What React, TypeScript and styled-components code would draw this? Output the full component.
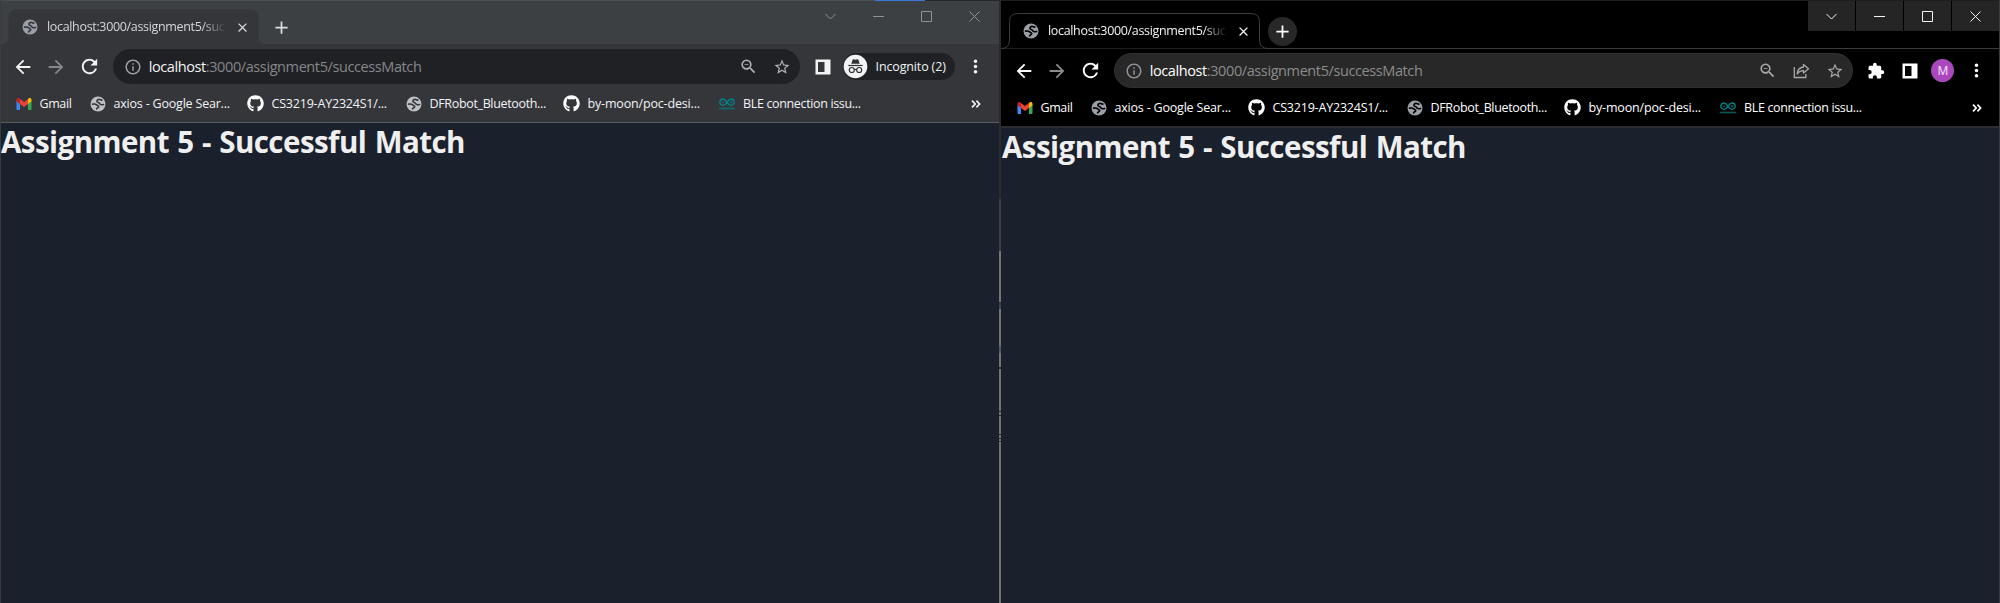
import React from 'react';
import styled, { createGlobalStyle, ThemeProvider } from 'styled-components';
import {
  MdAdd,
  MdArrowBack,
  MdArrowForward,
  MdClose,
  MdExtension,
  MdInfoOutline,
  MdMoreVert,
  MdRefresh,
  MdStarBorder,
  MdZoomOut,
} from 'react-icons/md';
import { FaGithub } from 'react-icons/fa';

const incognito = {
  strip: '#3c4043',
  stripHeight: '44px',
  topLine: '#4b4e50',
  toolbar: '#35363a',
  tabStroke: 'none',
  stripLine: '#35363a',
  field: '#202124',
  fieldLine: '#202124',
  text: '#f1f3f4',
  tabText: '#d4d6d9',
  dim: '#85878a',
  globe: '#bdc1c6',
  tabGlobe: '#9aa0a6',
  fieldIcon: '#b0b2b5',
  info: '#9aa0a6',
  controls: '#8f9193',
  controlBg: 'transparent',
  plusBg: 'transparent',
  plus: '#dadce0',
  pageLine: '#595b5f',
  pageLineHeight: '1px',
};

const regular: typeof incognito = {
  strip: '#000',
  stripHeight: '48px',
  topLine: '#1d1d1d',
  toolbar: '#000',
  tabStroke: '#3c3c3c',
  stripLine: '#3c3c3c',
  field: '#282828',
  fieldLine: '#303030',
  text: '#ffffff',
  tabText: '#f4f4f4',
  dim: '#8b8b8b',
  globe: '#9aa0a6',
  tabGlobe: '#9aa0a6',
  fieldIcon: '#a8a8a8',
  info: '#8e9196',
  controls: '#f2f2f2',
  controlBg: '#252525',
  plusBg: '#282828',
  plus: '#ffffff',
  pageLine: '#2c2e34',
  pageLineHeight: '2px',
};

declare module 'styled-components' {
  export interface DefaultTheme {
    [key: string]: string;
  }
}

const GlobalStyle = createGlobalStyle`
  * { box-sizing: border-box; }
  body { margin: 0; background: #1a202c; overflow: hidden; }
  svg { display: block; flex: none; }
`;

const Desktop = styled.div`
  display: flex;
  width: 2000px;
  height: 603px;
  font-family: 'Open Sans', 'Noto Sans', sans-serif;
`;

const Window = styled.section<{ $edge: 'left' | 'right' }>`
  position: relative;
  display: flex;
  flex-direction: column;
  width: 999px;
  background: #1a202c;

  &::after {
    content: '';
    position: absolute;
    top: 0;
    bottom: 0;
    ${(p) => p.$edge}: 0;
    width: 1px;
    background: #3b3c3f;
  }
`;

const TopEdge = styled.div`
  display: flex;
  height: 1px;
  flex: none;
  background: ${(p) => p.theme.topLine};
`;

const TopEdgePart = styled.span<{ $width: number; $color: string }>`
  width: ${(p) => p.$width}px;
  background: ${(p) => p.$color};
`;

const TabStrip = styled.div`
  display: flex;
  align-items: flex-end;
  flex: none;
  height: ${(p) => p.theme.stripHeight};
  padding-right: 1px;
  background: ${(p) => p.theme.strip};
  box-shadow: inset 0 -1px 0 ${(p) => p.theme.stripLine};
`;

const Tab = styled.div`
  position: relative;
  display: flex;
  align-items: center;
  width: 267px;
  height: 36px;
  padding-left: 22px;
`;

const TabOutline = styled.svg`
  position: absolute;
  inset: 0;
  fill: ${(p) => p.theme.toolbar};
  stroke: ${(p) => p.theme.tabStroke};
`;

const TabIcon = styled.span`
  position: relative;
  color: ${(p) => p.theme.tabGlobe};
`;

const TabTitle = styled.span`
  position: relative;
  width: 184px;
  margin-left: 9px;
  white-space: nowrap;
  font-size: 12.5px;
  line-height: 20px;
  letter-spacing: -0.33px;
  color: ${(p) => p.theme.tabText};
  mask-image: linear-gradient(to right, #000 155px, transparent 179px);
`;

const TabClose = styled.span`
  position: relative;
  margin-left: 4px;
  color: ${(p) => p.theme.tabText};
`;

const NewTab = styled.span`
  display: flex;
  align-items: center;
  justify-content: center;
  width: 29px;
  height: 29px;
  margin-bottom: 3px;
  border-radius: 50%;
  color: ${(p) => p.theme.plus};
  background: ${(p) => p.theme.plusBg};
`;

const WindowControls = styled.div`
  display: flex;
  align-self: flex-start;
  gap: 1px;
  margin-left: auto;
`;

const WindowControl = styled.span`
  display: flex;
  align-items: center;
  justify-content: center;
  width: 47px;
  height: 30px;
  background: ${(p) => p.theme.controlBg};
  color: ${(p) => p.theme.controls};
`;

const Toolbar = styled.div`
  display: flex;
  align-items: center;
  flex: none;
  height: 43px;
  padding: 0 7px 0 6px;
  background: ${(p) => p.theme.toolbar};
  color: ${(p) => p.theme.text};
`;

const ToolButton = styled.span<{ $muted?: boolean }>`
  display: flex;
  align-items: center;
  justify-content: center;
  flex: none;
  width: 33.4px;
  height: 33px;
  ${(p) => p.$muted && `color: ${p.theme.dim};`}
`;

const AddressBar = styled.div`
  display: flex;
  align-items: center;
  flex: 1;
  height: 35px;
  margin: 0 6px 0 7px;
  padding: 0 1px 0 9.5px;
  border-radius: 18px;
  background: ${(p) => p.theme.field};
  border: 1px solid ${(p) => p.theme.fieldLine};
  color: ${(p) => p.theme.fieldIcon};
`;

const InfoIcon = styled.span`
  color: ${(p) => p.theme.info};
`;

const Url = styled.span`
  flex: 1;
  margin-left: 7px;
  padding-top: 1px;
  font-size: 14.5px;
  line-height: 20px;
  letter-spacing: -0.4px;
  white-space: nowrap;
  color: ${(p) => p.theme.dim};
`;

const UrlHost = styled.span`
  color: ${(p) => p.theme.text};
`;

const ProfilePill = styled.div`
  display: flex;
  align-items: center;
  width: 112px;
  height: 27px;
  margin: 0 4px 0 3px;
  border-radius: 14px;
  background: #202124;
  font-size: 12.5px;
  letter-spacing: -0.15px;
  white-space: nowrap;
`;

const ProfileLabel = styled.span`
  margin-left: 8px;
`;

const Avatar = styled.span`
  display: flex;
  align-items: center;
  justify-content: center;
  width: 23px;
  height: 23px;
  border-radius: 50%;
  background: #ab47bc;
  color: #f6e8f8;
  font-size: 12px;
`;

const BookmarksBar = styled.nav`
  display: flex;
  align-items: center;
  flex: none;
  height: 34px;
  padding: 0 18px 3px 14.5px;
  background: ${(p) => p.theme.toolbar};
`;

const Bookmark = styled.span<{ $width: number; $tracking: number }>`
  display: flex;
  align-items: center;
  flex: none;
  gap: 7px;
  width: ${(p) => p.$width}px;
  font-size: 12.5px;
  line-height: 20px;
  letter-spacing: ${(p) => p.$tracking}px;
  white-space: nowrap;
  color: ${(p) => p.theme.text};
`;

const BookmarkIcon = styled.span`
  display: flex;
  justify-content: center;
  width: 18px;
  color: ${(p) => p.theme.globe};
`;

const GithubIcon = styled(FaGithub)`
  color: #fff;
`;

const Overflow = styled.span`
  margin-left: auto;
  color: ${(p) => p.theme.text};
`;

const Page = styled.main`
  flex: 1;
  padding: 1px 0 0 1px;
  border-top: ${(p) => p.theme.pageLineHeight} solid ${(p) => p.theme.pageLine};
  background: #1a202c;
`;

const Heading = styled.h2`
  margin: 0;
  font-size: 29.5px;
  line-height: 36px;
  font-weight: 700;
  letter-spacing: -0.54px;
  word-spacing: 1.2px;
  white-space: nowrap;
  color: #efefef;
`;

const Seam = styled.div`
  display: flex;
  flex-direction: column;
  width: 2px;
`;

const SeamPart = styled.span<{ $height: number; $color: string }>`
  height: ${(p) => p.$height}px;
  background: ${(p) => p.$color};
`;

const Globe = ({ cut }: { cut: string }) => (
  <svg width="16" height="16" viewBox="0 0 16 16">
    <circle cx="8" cy="8" r="7.5" fill="currentColor" />
    <g fill="none" stroke={cut} strokeWidth="1.700" strokeLinecap="round" strokeLinejoin="round">
      <path d="M11.800 4.100L9.600 3.500C8 3.200 6.600 4.300 7 5.600C7.300 6.700 9.300 6.300 9.700 7.600C10 8.800 11.600 8.900 13.500 8.500" />
      <path d="M2.600 8.200C4.200 7.900 5.800 8 6.600 8.800C7.200 9.600 8.800 9.600 8.700 10.700C8.500 11.900 7.200 11.600 6.600 12.800" />
    </g>
  </svg>
);

const Gmail = () => (
  <svg width="16" height="12" viewBox="0 0 16 12">
    <path d="M.5 2.200V11c0 .6.4 1 1 1H4V5.600z" fill="#4285f4" />
    <path d="M12 12h2.500c.6 0 1-.4 1-1V2.200L12 5.600z" fill="#34a853" />
    <path d="M12 1.200v4.700l3.500-2.700V1.800C15.500.2 13.700-.6 12.500.4z" fill="#fbbc04" />
    <path d="M4 5.900V1l4 3 4-3v4.900l-4 3z" fill="#ea4335" />
    <path d="M.5 1.800v1.400L4 5.900V1.100L3.500.4C2.200-.6.5.2.5 1.800z" fill="#c5221f" />
  </svg>
);

const Arduino = () => (
  <svg width="16" height="12" viewBox="0 0 16 12" fill="none" stroke="#00878f">
    <path d="M8 4.300C6.900 2.500 5.700 1 4 1a3.100 3.100 0 0 0 0 6.300c1.700 0 2.900-1.300 4-3 1.100-1.800 2.300-3.300 4-3.300a3.100 3.100 0 0 1 0 6.300c-1.700 0-2.900-1.300-4-3z" strokeWidth="1.300" />
    <path d="M2.800 4.200h2.400M10.800 4.200h2.400M12 3v2.400" strokeWidth=".8" />
    <path d="M0 10.500h16" strokeWidth="1.700" opacity=".65" />
  </svg>
);

const SidePanel = () => (
  <svg width="16" height="16" viewBox="0 0 16 16" fill="currentColor">
    <path fillRule="evenodd" d="M.5.500h15v15H.5zM3 3v10h6.500V3z" />
  </svg>
);

const Share = () => (
  <svg width="17" height="16" viewBox="0 0 17 16" fill="none" stroke="currentColor" strokeWidth="1.300">
    <path d="M1.300 4v10.500h11.500V11" />
    <path d="M10.500 1.500l5 4.300-5 4.300V7.700C7.500 7.600 5.700 8.800 4.200 11c.2-3.700 2.300-6.500 6.300-7z" strokeLinejoin="round" />
  </svg>
);

const IncognitoBadge = () => (
  <svg width="25" height="25" viewBox="0 0 25 25">
    <circle cx="12.500" cy="12.500" r="11.800" fill="#f1f3f4" />
    <path d="M8.300 9.700l1.200-3.800c.2-.6.700-.8 1.200-.6l1.800.5 1.800-.5c.5-.2 1 0 1.200.6l1.200 3.800z" fill="#303236" />
    <path d="M5.300 11.500h14.400" stroke="#303236" strokeWidth="1.200" />
    <g fill="none" stroke="#303236" strokeWidth="1.200">
      <circle cx="8.800" cy="16" r="2.500" />
      <circle cx="16.200" cy="16" r="2.500" />
      <path d="M11.300 15.700c.8-.5 1.600-.5 2.400 0" />
    </g>
  </svg>
);

const Chevrons = () => (
  <svg width="10" height="8" viewBox="0 0 10 8" fill="none" stroke="currentColor" strokeWidth="1.700">
    <path d="M1 .7L4.200 4 1 7.300M5.400.7L8.600 4 5.400 7.300" />
  </svg>
);

const controlPaths = ['M.5 3l5 5 5-5', 'M0 5.500h11', 'M.5.500h10v10H.5z', 'M.5.500l10 10M10.500.500l-10 10'];

const bookmarks = [
  { label: 'Gmail', icon: 'gmail', width: 74, tracking: -0.4 },
  { label: 'axios - Google Sear...', icon: 'globe', width: 158, tracking: -0.2 },
  { label: 'CS3219-AY2324S1/...', icon: 'github', width: 158, tracking: -0.2 },
  { label: 'DFRobot_Bluetooth...', icon: 'globe', width: 158, tracking: -0.34 },
  { label: 'by-moon/poc-desi...', icon: 'github', width: 155.5, tracking: -0.17 },
  { label: 'BLE connection issu...', icon: 'arduino', width: 150, tracking: -0.35 },
];

const bookmarkIcon = (kind: string, cut: string) => {
  if (kind === 'gmail') return <Gmail />;
  if (kind === 'github') return <GithubIcon size={17} />;
  if (kind === 'arduino') return <Arduino />;
  return <Globe cut={cut} />;
};

const seam: [number, string][] = [
  [199, '#2b2b2d'],
  [52, '#3b3f44'],
  [51, '#747474'],
  [1, '#222833'],
  [6, '#3a4656'],
  [37, '#747474'],
  [7, '#4c5b6b'],
  [14, '#747474'],
  [2, '#25272b'],
  [42, '#747474'],
  [1, '#2b2b2b'],
  [3, '#747474'],
  [1, '#2b2b2b'],
  [18, '#747474'],
  [1, '#2b2b2b'],
  [3, '#747474'],
  [1, '#2b2b2b'],
  [2, '#747474'],
  [1, '#2b2b2b'],
  [161, '#747474'],
];

function Browser({ isPrivate }: { isPrivate?: boolean }) {
  const theme = isPrivate ? incognito : regular;
  return (
    <ThemeProvider theme={theme}>
      <Window $edge={isPrivate ? 'left' : 'right'}>
        <TopEdge>
          {isPrivate && (
            <>
              <TopEdgePart $width={875} $color="#4b4e50" />
              <TopEdgePart $width={50} $color="#3b78d8" />
              <TopEdgePart $width={74} $color="#262729" />
            </>
          )}
        </TopEdge>
        <TabStrip>
          <Tab>
            <TabOutline width="267" height="36" viewBox="0 0 267 36">
              <path d="M0 35.500Q8.500 35.500 8.500 27V8.500Q8.500.500 16.500.500H250Q258.500.500 258.500 8.500V27Q258.500 35.500 267 35.500" />
            </TabOutline>
            <TabIcon>
              <Globe cut={theme.toolbar} />
            </TabIcon>
            <TabTitle>localhost:3000/assignment5/succ</TabTitle>
            <TabClose>
              <MdClose size={15} />
            </TabClose>
          </Tab>
          <NewTab>
            <MdAdd size={21} />
          </NewTab>
          <WindowControls>
            {controlPaths.map((d) => (
              <WindowControl key={d}>
                <svg width="11" height="11" viewBox="0 0 11 11" fill="none" stroke="currentColor">
                  <path d={d} />
                </svg>
              </WindowControl>
            ))}
          </WindowControls>
        </TabStrip>
        <Toolbar>
          <ToolButton>
            <MdArrowBack size={22} />
          </ToolButton>
          <ToolButton $muted>
            <MdArrowForward size={22} />
          </ToolButton>
          <ToolButton>
            <MdRefresh size={23} />
          </ToolButton>
          <AddressBar>
            <InfoIcon>
              <MdInfoOutline size={18} />
            </InfoIcon>
            <Url>
              <UrlHost>localhost</UrlHost>:3000/assignment5/successMatch
            </Url>
            <ToolButton>
              <MdZoomOut size={19} />
            </ToolButton>
            {!isPrivate && (
              <ToolButton>
                <Share />
              </ToolButton>
            )}
            <ToolButton>
              <MdStarBorder size={18} />
            </ToolButton>
          </AddressBar>
          {!isPrivate && (
            <ToolButton>
              <MdExtension size={18} />
            </ToolButton>
          )}
          <ToolButton>
            <SidePanel />
          </ToolButton>
          {isPrivate ? (
            <ProfilePill>
              <IncognitoBadge />
              <ProfileLabel>Incognito (2)</ProfileLabel>
            </ProfilePill>
          ) : (
            <ToolButton>
              <Avatar>M</Avatar>
            </ToolButton>
          )}
          <ToolButton>
            <MdMoreVert size={21} />
          </ToolButton>
        </Toolbar>
        <BookmarksBar>
          {bookmarks.map((b) => (
            <Bookmark key={b.label} $width={b.width} $tracking={b.tracking}>
              <BookmarkIcon>{bookmarkIcon(b.icon, theme.toolbar)}</BookmarkIcon>
              {b.label}
            </Bookmark>
          ))}
          <Overflow>
            <Chevrons />
          </Overflow>
        </BookmarksBar>
        <Page>
          <Heading>Assignment 5 - Successful Match</Heading>
        </Page>
      </Window>
    </ThemeProvider>
  );
}

export default function App() {
  return (
    <>
      <GlobalStyle />
      <Desktop>
        <Browser isPrivate />
        <Seam>
          {seam.map(([height, color], i) => (
            <SeamPart key={i} $height={height} $color={color} />
          ))}
        </Seam>
        <Browser />
      </Desktop>
    </>
  );
}
